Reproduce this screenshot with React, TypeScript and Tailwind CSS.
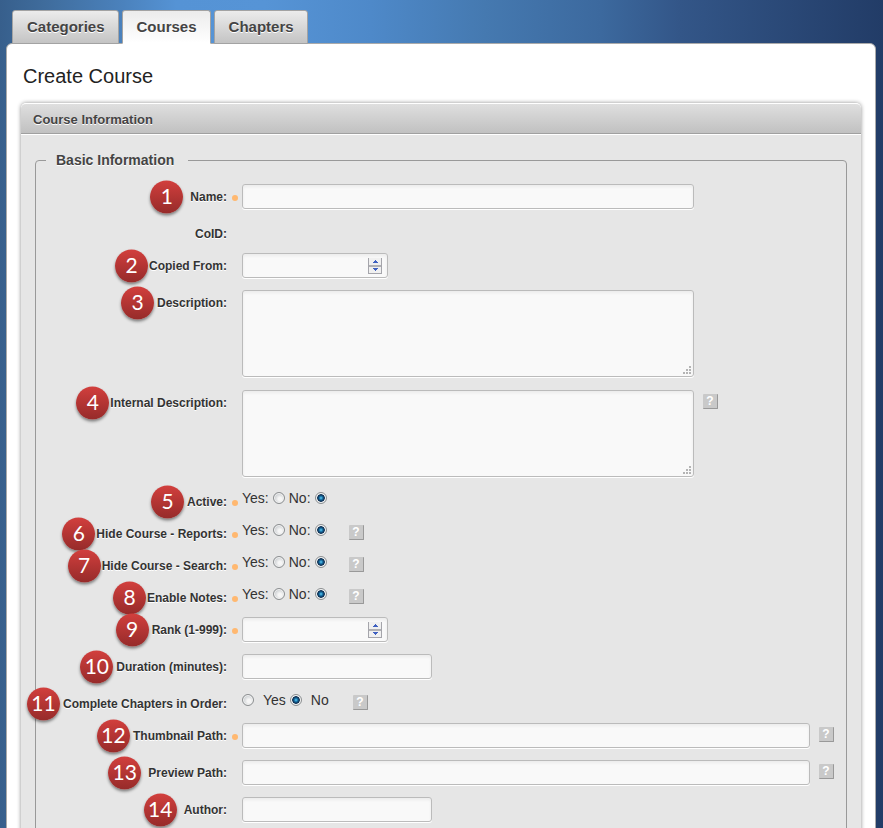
import { type ReactNode } from "react";

type Kind = "text" | "number" | "area" | "radio" | "order" | "none";

interface Field {
  id: string;
  label: string;
  kind: Kind;
  badge?: number;
  badgeGap?: string;
  required?: boolean;
  help?: boolean;
  width?: string;
  space?: string;
}

const TIGHT = "mr-px";
const NEAR = "mr-[3px]";
const FAR = "mr-[7px]";

const FIELDS: Field[] = [
  { id: "name", label: "Name:", kind: "text", badge: 1, badgeGap: FAR, required: true, width: "w-[452px]" },
  { id: "coid", label: "CoID:", kind: "none" },
  { id: "copied", label: "Copied From:", kind: "number", badge: 2, badgeGap: TIGHT },
  { id: "description", label: "Description:", kind: "area", badge: 3, badgeGap: NEAR, space: "pb-[13px]" },
  { id: "internal", label: "Internal Description:", kind: "area", badge: 4, badgeGap: TIGHT, help: true },
  { id: "active", label: "Active:", kind: "radio", badge: 5, badgeGap: NEAR, required: true },
  { id: "reports", label: "Hide Course - Reports:", kind: "radio", badge: 6, badgeGap: TIGHT, required: true, help: true },
  { id: "search", label: "Hide Course - Search:", kind: "radio", badge: 7, badgeGap: TIGHT, required: true, help: true },
  { id: "notes", label: "Enable Notes:", kind: "radio", badge: 8, badgeGap: TIGHT, required: true, help: true },
  { id: "rank", label: "Rank (1-999):", kind: "number", badge: 9, badgeGap: NEAR, required: true },
  { id: "duration", label: "Duration (minutes):", kind: "text", badge: 10, badgeGap: NEAR, width: "w-[190px]" },
  { id: "order", label: "Complete Chapters in Order:", kind: "order", badge: 11, badgeGap: NEAR, help: true },
  { id: "thumbnail", label: "Thumbnail Path:", kind: "text", badge: 12, badgeGap: NEAR, required: true, help: true, width: "w-[568px]" },
  { id: "preview", label: "Preview Path:", kind: "text", badge: 13, badgeGap: FAR, help: true, width: "w-[568px]" },
  { id: "author", label: "Author:", kind: "text", badge: 14, badgeGap: FAR, width: "w-[190px]" },
];

const BOX =
  "block rounded-[3px] border border-[#bbb] bg-[#f9f9f9] px-1 text-sm shadow-[inset_0_2px_3px_#ececec,0_1px_0_#fff] outline-none";

function Badge({ value, gap }: { value: number; gap: string }) {
  return (
    <span
      aria-hidden="true"
      className={`absolute top-1/2 right-full ${gap} flex size-[33px] -translate-y-1/2 items-center justify-center rounded-full bg-linear-to-b from-[#d23f3d] to-[#962b2a] pb-[3px] font-['Lato','Open_Sans',sans-serif] text-[21px] leading-none font-normal text-white shadow-[0_2px_3px_rgba(0,0,0,0.45)] [text-shadow:none]`}
    >
      {value}
    </span>
  );
}

function Help({ label }: { label: string }) {
  return (
    <button
      type="button"
      aria-label={`Help for ${label}`}
      className="flex size-[15px] shrink-0 items-center justify-center rounded-[1px] border-r border-b border-[#999] bg-[#c9c9c9] text-[12px] leading-none font-bold text-white"
    >
      ?
    </button>
  );
}

function Radio({ id, name, value, checked }: { id: string; name: string; value: string; checked?: boolean }) {
  return (
    <input
      type="radio"
      id={id}
      name={name}
      value={value}
      defaultChecked={checked}
      className="size-3 shrink-0 appearance-none rounded-full border border-[#8c8f91] bg-[radial-gradient(circle_at_60%_60%,#f6f6f6_20%,#c4c8cb_75%)] shadow-[inset_0_0_0_1px_#f4f4f4] checked:bg-[radial-gradient(circle_at_50%_50%,#6fd0f5_0,#1b7fb5_20%,#12395f_42%,#17395b_50%,#e0e4e6_60%)]"
    />
  );
}

function Stepper({ label }: { label: string }) {
  return (
    <span className="absolute top-[5px] right-1.5 flex h-4 w-[14px] flex-col border border-t-0 border-[#a5a5ab] bg-[#f0f0f0]">
      <button type="button" aria-label={`Increase ${label}`} className="flex flex-1 items-center justify-center border-b-2 border-[#b0b0b4]">
        <svg viewBox="0 0 5 3" className="h-[3px] w-[5px]" shapeRendering="crispEdges">
          <path d="M2 0h1v1h1v1h1v1H0V2h1V1h1z" fill="#3f60c0" />
        </svg>
      </button>
      <button type="button" aria-label={`Decrease ${label}`} className="flex flex-1 items-center justify-center">
        <svg viewBox="0 0 5 3" className="h-[3px] w-[5px]" shapeRendering="crispEdges">
          <path d="M0 0h5v1H4v1H3v1H2V2H1V1H0z" fill="#3f60c0" />
        </svg>
      </button>
    </span>
  );
}

function Control({ field }: { field: Field }): ReactNode {
  const { id, label, kind, width } = field;
  if (kind === "text") return <input id={id} type="text" className={`${BOX} h-[25px] max-w-full ${width}`} />;
  if (kind === "number")
    return (
      <span className="relative block w-[146px]">
        <input id={id} type="text" inputMode="numeric" className={`${BOX} h-[25px] w-full`} />
        <Stepper label={label} />
      </span>
    );
  if (kind === "area")
    return (
      <span className="relative block w-[452px] max-w-full">
        <textarea id={id} className={`${BOX} h-[87px] w-full resize-none`} />
        <svg viewBox="0 0 8 8" className="absolute right-[3px] bottom-[3px] size-2" shapeRendering="crispEdges" fill="#b4b4b4">
          <path d="M6 0h2v2H6zM3 3h2v2H3zM6 3h2v2H6zM0 6h2v2H0zM3 6h2v2H3zM6 6h2v2H6z" />
        </svg>
      </span>
    );
  if (kind === "radio")
    return (
      <div role="radiogroup" aria-label={label} className="flex h-[17px] w-[98px] items-center gap-1">
        <label htmlFor={`${id}-yes`}>Yes:</label>
        <Radio id={`${id}-yes`} name={id} value="yes" />
        <label htmlFor={`${id}-no`}>No:</label>
        <Radio id={`${id}-no`} name={id} value="no" checked />
      </div>
    );
  if (kind === "order")
    return (
      <div role="radiogroup" aria-label={label} className="flex h-[17px] w-[102px] items-center gap-1">
        <Radio id={`${id}-yes`} name={id} value="yes" />
        <label htmlFor={`${id}-yes`} className="pl-[5px]">Yes</label>
        <Radio id={`${id}-no`} name={id} value="no" checked />
        <label htmlFor={`${id}-no`} className="pl-[5px]">No</label>
      </div>
    );
  return null;
}

function Row({ field }: { field: Field }) {
  const isGroup = field.kind === "radio" || field.kind === "order";
  const caption = (
    <>
      {field.badge && <Badge value={field.badge} gap={field.badgeGap ?? NEAR} />}
      {field.label}
    </>
  );
  const captionClass = "relative h-[25px] text-[12px] leading-[26px] font-bold whitespace-nowrap text-[#333] [text-shadow:0_1px_0_#fff]";
  return (
    <div className={`flex min-h-8 ${field.space ?? (isGroup || field.kind === "none" ? "pb-0" : "pb-3")}`}>
      <div className="flex h-[25px] w-[191px] shrink-0 justify-end">
        {isGroup || field.kind === "none" ? (
          <span className={captionClass}>{caption}</span>
        ) : (
          <label htmlFor={field.id} className={captionClass}>{caption}</label>
        )}
      </div>
      <div className="flex h-[25px] w-[15px] shrink-0 items-center justify-center pt-[3px] pl-px">
        {field.required && <span className="size-1.5 rounded-full bg-[#ffb870]" />}
      </div>
      <Control field={field} />
      {field.help && (
        <div className="flex h-[23px] items-center pl-[9px]">
          <Help label={field.label} />
        </div>
      )}
    </div>
  );
}

const TAB = "h-[34px] rounded-t-[3px] border border-[#a3a3a3] pr-[13px] pl-3.5 text-[15px] font-bold text-[#444] [text-shadow:0_1px_0_#fff]";

export default function App() {
  return (
    <div className="h-screen overflow-hidden bg-[linear-gradient(to_right,#375f8c_0%,#3f6c9c_5%,#4b82bd_14%,#5593d5_20%,#5694d6_30%,#4e89c9_42%,#4579b0_55%,#3c699e_68%,#335688_77%,#223c67_100%)] pt-2.5 pr-[7px] pl-1.5 font-['Liberation_Sans',Arial,sans-serif] text-sm text-[#333]">
      <div role="tablist" className="relative z-10 flex gap-[3px] pl-1.5">
        <button type="button" role="tab" aria-selected="false" className={`${TAB} bg-linear-to-b from-[#ececec] to-[#c4c4c4]`}>Categories</button>
        <button type="button" role="tab" aria-selected="true" className={`${TAB} border-b-white bg-linear-to-b from-[#ececec] to-white`}>Courses</button>
        <button type="button" role="tab" aria-selected="false" className={`${TAB} bg-linear-to-b from-[#ececec] to-[#c4c4c4]`}>Chapters</button>
      </div>
      <main className="-mt-px rounded-t-md border border-[#aaa] bg-white px-3.5">
        <h1 className="pt-[18px] pl-0.5 text-[20px] leading-7 text-[#222]">Create Course</h1>
        <section className="mt-[13px] rounded-t-[5px] bg-[#e6e6e6] shadow-[0_0_4px_rgba(0,0,0,0.45)]">
          <h2 className="h-[31px] rounded-t-[5px] border-t border-b border-t-white border-b-[#a0a0a0] bg-linear-to-b from-[#dfdfdf] to-[#c1c1c1] pl-3 text-[13px] leading-8 font-bold text-[#444] [text-shadow:0_1px_0_#fff]">
            Course Information
          </h2>
          <div className="border-t border-white px-3.5 pt-4">
            <fieldset className="rounded-[4px] border border-[#999] pt-[15px]">
              <legend className="ml-2.5 h-[18px] pr-3.5 pl-2.5 text-[14px] leading-[18px] font-bold text-[#444] [text-shadow:0_1px_0_#fff]">
                Basic Information
              </legend>
              {FIELDS.map((field) => (
                <Row key={field.id} field={field} />
              ))}
            </fieldset>
          </div>
        </section>
      </main>
    </div>
  );
}
